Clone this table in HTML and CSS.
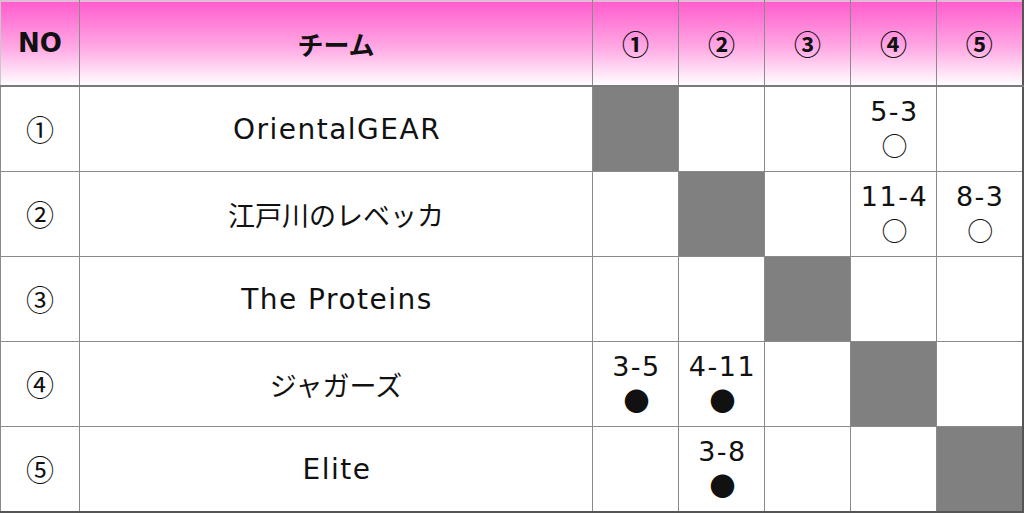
FILE: index.html
```html
<!DOCTYPE html>
<html lang="ja">
<head>
<meta charset="utf-8">
<link rel="stylesheet" href="styles.css">
</head>
<body>
<table class="league">
  <colgroup>
    <col class="c-no"><col class="c-team"><col class="c-x"><col class="c-x"><col class="c-x"><col class="c-x"><col class="c-x">
  </colgroup>
  <thead>
    <tr>
      <th class="no">NO</th><th class="jp">チーム</th><th class="cn">①</th><th class="cn">②</th><th class="cn">③</th><th class="cn">④</th><th class="cn">⑤</th>
    </tr>
  </thead>
  <tbody>
    <tr>
      <td class="cn">①</td><td class="team">OrientalGEAR</td><td class="self"></td><td></td><td></td><td class="score">5-3<br><span class="mark">○</span></td><td></td>
    </tr>
    <tr>
      <td class="cn">②</td><td class="team jp">江戸川のレベッカ</td><td></td><td class="self"></td><td></td><td class="score">11-4<br><span class="mark">○</span></td><td class="score">8-3<br><span class="mark">○</span></td>
    </tr>
    <tr>
      <td class="cn">③</td><td class="team">The Proteins</td><td></td><td></td><td class="self"></td><td></td><td></td>
    </tr>
    <tr>
      <td class="cn">④</td><td class="team jp">ジャガーズ</td><td class="score">3-5<br><span class="mark">●</span></td><td class="score">4-11<br><span class="mark">●</span></td><td></td><td class="self"></td><td></td>
    </tr>
    <tr>
      <td class="cn">⑤</td><td class="team">Elite</td><td></td><td class="score">3-8<br><span class="mark">●</span></td><td></td><td></td><td class="self"></td>
    </tr>
  </tbody>
</table>
</body>
</html>
```
FILE: styles.css
```css
html, body {
  margin: 0;
  padding: 0;
  background: #ffffff;
}
.league {
  border-collapse: collapse;
  width: 1023px;
  table-layout: fixed;
  font-family: "DejaVu Sans", "Noto Sans CJK JP", sans-serif;
  color: #111;
  border-top: 1px solid #c8c8c8;
  border-left: 1px solid #c8c8c8;
  border-right: 2px solid #555;
  border-bottom: 2px solid #555;
}
.c-no { width: 79px; }
.c-team { width: 513px; }
.c-x { width: 86px; }
.league th,
.league td {
  border: 1px solid #8a8a8a;
  text-align: center;
  vertical-align: middle;
  padding: 0;
  line-height: 33px;
}
.league th {
  height: 84px;
  font-size: 26px;
  font-weight: 700;
  background: linear-gradient(to bottom, #ff5ccd 0%, #ffa9e4 55%, #ffffff 100%);
  border-bottom: 2px solid #7a7a7a;
  border-top: 1px solid #c8c8c8;
}
.league thead th:first-child { border-left: 1px solid #c8c8c8; }
.league th.jp {
  font-family: "Noto Sans CJK JP", sans-serif;
  font-size: 26px;
  font-weight: 700;
}
.league th.cn {
  font-family: "Noto Sans CJK JP", sans-serif;
  font-size: 27px;
  font-weight: 700;
}
.league td {
  height: 84px;
  font-size: 27px;
  font-weight: 400;
}
.league td.cn {
  font-family: "Noto Sans CJK JP", sans-serif;
  font-size: 28px;
}
.league td.team {
  letter-spacing: 1.5px;
  padding-left: 2px;
  font-size: 28px;
}
.league td.team.jp {
  font-family: "Noto Sans CJK JP", sans-serif;
  letter-spacing: 0;
  padding-left: 0;
  font-size: 27px;
}
.league td.score {
  letter-spacing: 1.5px;
  padding-left: 2px;
}
.mark {
  font-family: "Noto Sans CJK JP", sans-serif;
  font-size: 26px;
  letter-spacing: 0;
}
.league td.self {
  background: #808080;
}
```
